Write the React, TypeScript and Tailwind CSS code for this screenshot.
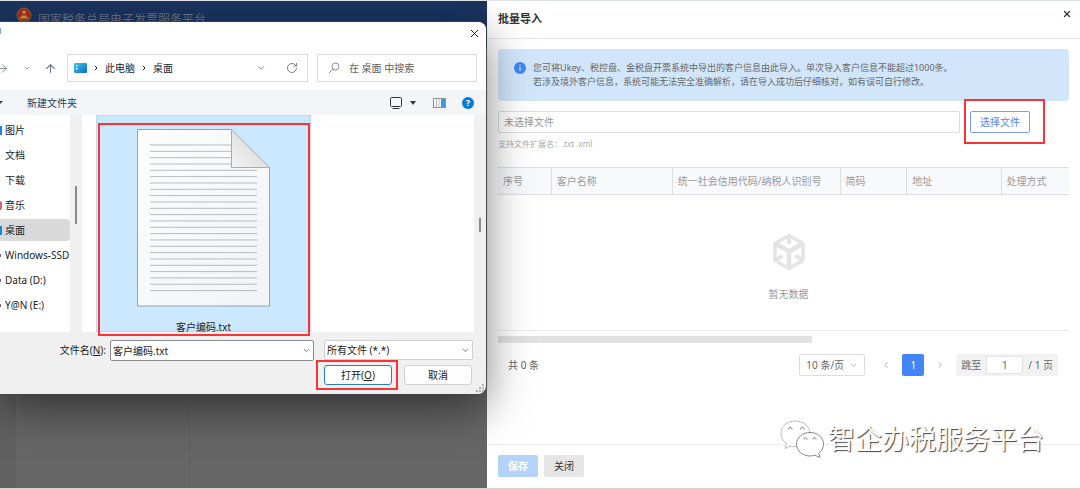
import React from 'react';
import { ArrowRight, ArrowUp, ChevronDown, ChevronLeft, ChevronRight, RotateCw, X } from 'lucide-react';

const places = [
  { name: '图片', mark: 'bg-[#1b87d6]' },
  { name: '文档', mark: '' },
  { name: '下载', mark: '' },
  { name: '音乐', mark: 'bg-[#d8607c] rounded-r-full' },
  { name: '桌面', mark: 'bg-[#1b87d6]', active: true },
  { name: 'Windows-SSD', mark: 'bg-gray-500', drive: true },
  { name: 'Data (D:)', mark: 'bg-gray-500', drive: true },
  { name: 'Y@N (E:)', mark: 'bg-gray-500', drive: true },
];

const columns = [
  { title: '序号', width: 'w-[9.3%]' },
  { title: '客户名称', width: 'w-[21.2%]' },
  { title: '统一社会信用代码/纳税人识别号', width: 'w-[29.4%]' },
  { title: '简码', width: 'w-[11.7%]' },
  { title: '地址', width: 'w-[16.5%]' },
  { title: '处理方式', width: 'w-[11.9%]' },
];

const Emblem = () => (
  <svg viewBox="0 0 18 18" className="w-[18px] h-[18px] shrink-0">
    <circle cx="9" cy="8" r="7.5" fill="#8a5a2b" />
    <circle cx="9" cy="7.5" r="6" fill="#a8281f" />
    <path d="M9 2.5l.8 1.7 1.8.2-1.3 1.2.3 1.8L9 6.5l-1.600.9.3-1.800-1.300-1.200 1.800-.2z" fill="#c59a3c" />
    <path d="M5 10h8v1.500H5zM6.500 8.500h5V10h-5z" fill="#c59a3c" />
    <path d="M1 15c3-1.500 5-1 8 0 3-1 5-1.500 8 0l-2 2H3z" fill="#7d3a2a" />
  </svg>
);

const TextFileIcon = () => {
  const lines = Array.from({ length: 24 }, (_, i) => 16 + i * 6.33);
  return (
    <svg viewBox="0 0 133 178" className="w-[133px] h-[178px] shrink-0">
      <defs>
        <linearGradient id="paper" x1="0" y1="0" x2="1" y2="1">
          <stop offset="0" stopColor="#fdfdfd" />
          <stop offset="1" stopColor="#f1f3f6" />
        </linearGradient>
        <linearGradient id="fold" x1="0" y1="1" x2="1" y2="0">
          <stop offset="0" stopColor="#f4f4f4" />
          <stop offset="1" stopColor="#cfcfcf" />
        </linearGradient>
      </defs>
      <path d="M.5.5H94l38.500 38V177H.5z" fill="url(#paper)" stroke="#9aa3ab" />
      {lines.map((y, i) => (
        <path key={i} d={`M13 ${y}H${i < 4 ? 94 : 120}`} stroke="#b9bbbd" />
      ))}
      <path d="M94.500.5V38.500h38z" fill="url(#fold)" stroke="#a5abb0" />
    </svg>
  );
};

const EmptyBox = () => (
  <svg viewBox="0 0 32 38" className="w-8 h-[38px]" fill="none" stroke="#e4e4e4">
    <path d="M16 2.500L30 10.500v17L16 35.500 2 27.500v-17z" strokeWidth="3.500" strokeLinejoin="round" />
    <path d="M3 11l13 7.500L29 11M16 18.500V35" strokeWidth="4.500" />
    <path d="M16 3v8M3 26.500l6.500-3.500M29 26.500l-6.500-3.500" strokeWidth="4" />
  </svg>
);

const WechatMark = () => (
  <svg viewBox="0 0 46 40" className="w-[46px] h-10" fill="#fff" strokeWidth="1">
    <path d="M16 2C8 2 2 7.500 2 14.500c0 4 2 7.500 5.500 10L6 29.500l5.500-2.500c1.500.5 3 .7 4.500.7 8 0 15-6 15-13.200S24 2 16 2z" stroke="#bbb" />
    <path d="M31 13.500c-7.500 0-13.500 5-13.500 11.500S23.500 37 31 37c1.700 0 3.300-.3 4.800-.8L41 38.500l-1.300-4.300c3-2.200 4.800-5.400 4.800-9.200 0-6.500-6-11.500-13.500-11.500z" stroke="#888" />
    <path d="M9.500 10.500c0-3 3.500-3 3.500 0M21.500 10.500c0-3 3.500-3 3.500 0M25 20.500c0-2.500 3-2.500 3 0M34 20.500c0-2.500 3-2.500 3 0" stroke="#777" fill="none" />
  </svg>
);

const Highlight = ({ className }: { className: string }) => (
  <span className={`absolute border-[2px] border-[#fa3434] pointer-events-none ${className}`} />
);

const FileDialog: React.FC = () => (
  <section
    role="dialog"
    aria-label="打开"
    className="absolute left-0 top-[21px] w-[45%] flex flex-col bg-[#f0f0f0] rounded-r-lg text-[10px] leading-4 text-[#1b1b1b] shadow-[0_14px_44px_rgba(0,0,0,0.5),0_0_1px_1px_rgba(90,90,90,0.5)]"
  >
    <div className="bg-white rounded-tr-lg pb-2">
      <div className="flex h-8 justify-between items-start pt-[5px] pr-[5px]">
        <span className="w-px h-[6px] mt-px bg-[#7ba4dc]" />
        <button aria-label="关闭窗口"><X size={13} strokeWidth={1.800} /></button>
      </div>
      <div className="flex items-center pr-[9px] text-gray-500">
        <button aria-label="前进" className="-ml-1"><ArrowRight size={13} strokeWidth={1.500} /></button>
        <button aria-label="最近位置" className="ml-[14px]"><ChevronDown size={8} /></button>
        <button aria-label="上一级" className="ml-[13px]"><ArrowUp size={13} strokeWidth={2} /></button>
        <div className="ml-[10px] flex flex-1 items-center h-7 border border-[#dcdcdc] px-[6px] text-[#222]">
          <svg viewBox="0 0 13 10" className="w-[13px] h-[10px]">
            <defs>
              <linearGradient id="desk" x1="0" y1="0" x2="1" y2="1">
                <stop offset="0" stopColor="#3ccbe8" />
                <stop offset="1" stopColor="#0c6cc0" />
              </linearGradient>
            </defs>
            <rect width="13" height="10" rx="1" fill="url(#desk)" />
            <path d="M2 2h1.500v1.500H2zM2 5h1.500v1.500H2z" fill="#fff" />
          </svg>
          <ChevronRight size={8} strokeWidth={3} className="mx-[5px]" />
          <span>此电脑</span>
          <ChevronRight size={8} strokeWidth={3} className="mx-[5px]" />
          <span>桌面</span>
          <button aria-label="展开地址" className="ml-auto text-gray-500"><ChevronDown size={10} /></button>
          <button aria-label="刷新" className="ml-5 mr-[3px] text-gray-500"><RotateCw size={12} strokeWidth={1.800} /></button>
        </div>
        <label className="ml-[9px] flex items-center w-[160px] h-7 border border-[#dcdcdc] pl-[10px]">
          <svg viewBox="0 0 12 12" className="w-3 h-3 shrink-0" fill="none" stroke="#8d8d8d">
            <circle cx="7.500" cy="4.500" r="3.500" />
            <path d="M5 7L1 11" />
          </svg>
          <input aria-label="搜索" placeholder="在 桌面 中搜索" className="min-w-0 flex-1 ml-[9px] outline-none placeholder:text-[#606060]" />
        </label>
      </div>
    </div>

    <div className="flex items-center h-[25px] bg-[#f4f5f8] pr-3 text-[#23395d]">
      <span className="border-t-[3px] border-r-[3px] border-t-[#23395d] border-r-transparent" />
      <button className="ml-6">新建文件夹</button>
      <button aria-label="视图" className="ml-auto flex items-center">
        <svg viewBox="0 0 12 12" className="w-3 h-3" fill="none" stroke="#333">
          <rect x=".5" y=".5" width="11" height="9" rx="1" />
          <path d="M2.500 11.500h7" />
        </svg>
        <span className="ml-2 border-t-[4px] border-x-[3px] border-t-[#23395d] border-x-transparent" />
      </button>
      <button aria-label="预览窗格" className="ml-[17px]">
        <svg viewBox="0 0 13 10" className="w-[13px] h-[10px]">
          <rect x=".5" y=".5" width="12" height="9" fill="#fff" stroke="#8c9299" />
          <path d="M3.500 1v8M6 1v8" stroke="#b8bcc0" />
          <rect x="8" y="1" width="4" height="8" fill="#3b97e8" />
        </svg>
      </button>
      <button aria-label="帮助" className="ml-4 w-3 h-3 rounded-full bg-[#0a7bd4] text-white font-bold text-[9px] leading-3">?</button>
    </div>

    <div className="flex h-[217px]">
      <nav className="w-[70px] bg-white pt-1">
        {places.map((p) => (
          <a
            key={p.name}
            href="#"
            className={`flex items-center h-[22px] mb-[3px] rounded-r-sm whitespace-nowrap overflow-hidden ${p.active ? 'bg-[#d9d9d9]' : ''}`}
          >
            <span className={`${p.drive ? 'h-[3px] w-px' : 'h-[9px] w-[2px]'} ${p.mark}`} />
            <span className={p.drive ? 'ml-1' : 'ml-[3px]'}>{p.name}</span>
          </a>
        ))}
      </nav>
      <div className="w-3 flex justify-center pt-[71px]">
        <span className="w-[2px] h-[38px] bg-[#8b8b8b]" />
      </div>
      <div className="flex-1 bg-white pl-[14px]">
        <button className="relative w-[215px] h-full flex flex-col items-center bg-[#cce8ff] border border-[#b5dcfc] pt-[13px]">
          <TextFileIcon />
          <span className="mt-3">客户编码.txt</span>
          <Highlight className="left-px right-0 top-[7px] -bottom-[5px]" />
        </button>
      </div>
      <div className="w-3 flex justify-center pt-[103px]">
        <span className="w-[2px] h-[14px] bg-[#8b8b8b]" />
      </div>
    </div>

    <div className="flex items-start pt-2 pr-[13px]">
      <label htmlFor="filename" className="ml-auto mr-1 leading-[21px]">
        文件名(<u>N</u>):
      </label>
      <div className="flex items-center w-[204px] h-[21px] bg-white border border-[#8a8a8a] rounded-[2px] px-[2px]">
        <input id="filename" defaultValue="客户编码.txt" className="min-w-0 flex-1 outline-none" />
        <ChevronDown size={9} className="text-gray-600" />
      </div>
      <div className="relative ml-[10px] w-[149px]">
        <select aria-label="文件类型" className="appearance-none w-full h-5 bg-white border border-[#d0d0d0] rounded-[2px] pl-[2px] outline-none">
          <option>所有文件 (*.*)</option>
        </select>
        <ChevronDown size={9} className="absolute right-[3px] top-[6px] text-gray-600 pointer-events-none" />
      </div>
    </div>
    <div className="relative flex justify-end gap-3 pt-1 pb-[9px] pr-[14px]">
      <div className="relative">
        <button className="w-[68px] h-5 bg-white border border-[#2a80c8] rounded-[3px]">
          打开(<u>O</u>)
        </button>
        <Highlight className="-left-2 -right-[6px] -inset-y-[5px]" />
      </div>
      <button className="w-[68px] h-5 bg-[#fdfdfd] border border-[#d0d0d0] rounded-[3px]">取消</button>
      <svg viewBox="0 0 9 9" className="absolute right-[1px] bottom-[1px] w-[9px] h-[9px]" fill="#b0b0b0">
        <path d="M6 0h2v2H6zM3 3h2v2H3zM6 3h2v2H6zM0 6h2v2H0zM3 6h2v2H3zM6 6h2v2H6z" />
      </svg>
    </div>
  </section>
);

const ImportPanel: React.FC = () => (
  <main className="flex-1 min-w-0 flex flex-col bg-white text-[10px] leading-[14px] text-[#666]">
    <header className="flex items-start justify-between h-[38px] border-b border-[#e8e8e8] pl-[11px] pr-2">
      <h1 className="text-[11px] leading-9 font-bold text-[#333]">批量导入</h1>
      <button aria-label="关闭面板" className="mt-2 text-[#333]"><X size={10} strokeWidth={3} /></button>
    </header>

    <div className="px-[11px] pt-[10px]">
      <div className="flex items-start rounded bg-[#d2e6fb] h-[52px] pl-4 pt-3">
        <svg viewBox="0 0 12 12" className="w-3 h-3 mt-px shrink-0">
          <circle cx="6" cy="6" r="6" fill="#4285f4" />
          <path d="M6 5v4M6 2.500v1.300" stroke="#fff" />
        </svg>
        <p className="ml-[7px] text-[9px] whitespace-nowrap">
          您可将Ukey、税控盘、金税盘开票系统中导出的客户信息由此导入。单次导入客户信息不能超过1000条。
          <br />
          若涉及境外客户信息，系统可能无法完全准确解析，请在导入成功后仔细核对，如有误可自行修改。
        </p>
      </div>

      <div className="flex mt-[10px]">
        <input aria-label="文件" readOnly placeholder="未选择文件" className="flex-1 min-w-0 h-[22px] border border-[#dcdcdc] rounded-[2px] px-[5px] outline-none placeholder:text-[#999]" />
        <div className="relative ml-[10px] mr-[39px]">
          <button className="w-[60px] h-[22px] border border-[#7a9cf8] rounded-[2px] text-[#5b82f5]">选择文件</button>
          <Highlight className="-left-[6px] -right-[15px] -top-3 -bottom-[11px]" />
        </div>
      </div>
      <p className="mt-1 text-[8px] text-[#aaa]">支持文件扩展名：.txt .xml</p>

      <table className="mt-4 w-full table-fixed border-collapse">
        <thead>
          <tr className="h-[27px] bg-[#f8f9fd] border-y border-[#dfdfdf]">
            {columns.map((c, i) => (
              <th key={c.title} className={`${c.width} pl-[5px] text-left font-normal whitespace-nowrap text-[#999] ${i > 0 ? 'border-l border-[#dfdfdf]' : ''}`}>
                {c.title}
              </th>
            ))}
          </tr>
        </thead>
        <tbody>
          <tr className="h-[136px] border-b border-[#ececec]">
            <td colSpan={6} className="text-center text-[#999]">
              <div className="flex flex-col items-center gap-4 pt-2 pl-[10px]">
                <EmptyBox />
                暂无数据
              </div>
            </td>
          </tr>
        </tbody>
      </table>
      <div className="mt-[5px] w-[55%] h-[7px] bg-[#e2e2e2]" />

      <div className="flex items-center mt-[11px] pl-[10px] pr-[11px] text-[#666]">
        <span>共 0 条</span>
        <div className="relative ml-auto w-[66px]">
          <select aria-label="每页条数" className="appearance-none w-full h-[22px] bg-white border border-[#dcdcdc] rounded-[2px] pl-[6px] outline-none">
            <option>10 条/页</option>
          </select>
          <ChevronDown size={9} className="absolute right-[7px] top-[7px] text-[#aaa] pointer-events-none" />
        </div>
        <button aria-label="上一页" className="ml-4 text-[#aaa]"><ChevronLeft size={10} /></button>
        <button className="ml-[11px] w-[22px] h-[22px] rounded-[2px] bg-[#4285f4] text-white">1</button>
        <button aria-label="下一页" className="ml-[11px] text-[#aaa]"><ChevronRight size={10} /></button>
        <div className="ml-[11px] flex items-center h-[22px] px-[5px] bg-[#f2f2f2] rounded-[2px]">
          <label htmlFor="jump">跳至</label>
          <input id="jump" defaultValue="1" className="mx-[5px] w-[37px] h-[18px] bg-white border border-[#e3e3e3] rounded-[2px] text-center outline-none" />
          <span>/ 1 页</span>
        </div>
      </div>
    </div>

    <footer className="mt-auto relative flex gap-[6px] border-t border-[#ececec] pl-[11px] pt-[10px] pb-[11px]">
      <button className="w-10 h-[22px] rounded-[2px] bg-[#b3d3fa] text-white font-bold">保存</button>
      <button className="w-10 h-[22px] rounded-[2px] bg-[#e6e6e6] text-[#333]">关闭</button>
      <div className="absolute right-9 -top-[26px] flex items-center gap-[3px] pointer-events-none">
        <WechatMark />
        <span className="text-[27px] leading-10 text-white [text-shadow:1px_1px_1px_#444]">智企办税服务平台</span>
      </div>
    </footer>
  </main>
);

export default function App() {
  return (
    <div className="relative flex min-h-screen overflow-hidden border-t border-[#dfe2e6] border-b border-b-[#bfe3bf] font-['Noto_Sans','Noto_Sans_CJK_SC',sans-serif]">
      <div className="w-[45.1%] flex flex-col bg-[#666]">
        <div className="flex items-start h-[46px] pl-[15px] pt-[6px] bg-[#1a335f]">
          <Emblem />
          <span className="ml-[5px] mt-1 text-[12px] leading-[18px] whitespace-nowrap text-[#65738c]">国家税务总局电子发票服务平台</span>
        </div>
        <div className="flex flex-1">
          <div className="w-4 bg-[#606060]" />
          <div className="w-[174px] border-r border-[#606060]" />
        </div>
      </div>
      <ImportPanel />
      <FileDialog />
    </div>
  );
}
